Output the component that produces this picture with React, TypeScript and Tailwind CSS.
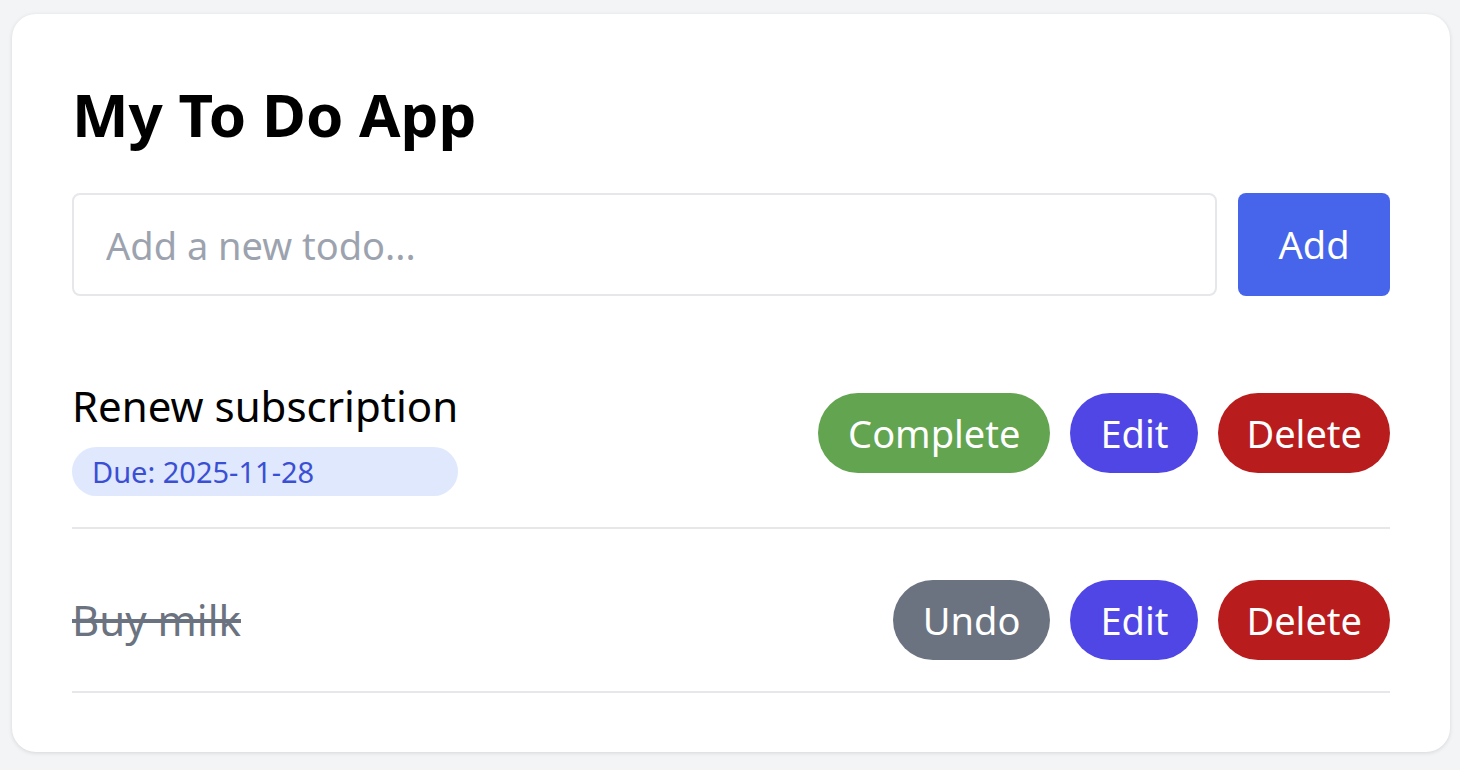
import { useState } from "react";

type Todo = { id: number; text: string; due?: string; done: boolean };

const initialTodos: Todo[] = [
  { id: 1, text: "Renew subscription", due: "2025-11-28", done: false },
  { id: 2, text: "Buy milk", done: true },
];

const App = () => {
  const [todos, setTodos] = useState<Todo[]>(initialTodos);
  const [draft, setDraft] = useState("");

  const toggle = (id: number) =>
    setTodos((list) => list.map((t) => (t.id === id ? { ...t, done: !t.done } : t)));
  const remove = (id: number) => setTodos((list) => list.filter((t) => t.id !== id));
  const add = () => {
    if (!draft.trim()) return;
    setTodos((list) => [...list, { id: Date.now(), text: draft.trim(), done: false }]);
    setDraft("");
  };

  return (
    <div
      className="min-h-screen bg-[#f3f4f6] pt-[14px] pb-[19px] pl-[12px] pr-[10px]"
      style={{ fontFamily: '"Noto Sans", "Open Sans", sans-serif' }}
    >
      <div className="bg-white rounded-[24px] shadow-[0_1px_4px_rgba(0,0,0,0.12)] px-[60px] pt-[60px] pb-[59px]">
        <h1 className="text-[60px] leading-[80px] font-bold text-black h-[80px]">My To Do App</h1>

        <div className="flex gap-[21px] mt-[39px]">
          <input
            value={draft}
            onChange={(e) => setDraft(e.target.value)}
            placeholder="Add a new todo..."
            className="flex-1 h-[103px] border-2 border-[#e5e7eb] rounded-[8px] px-[32px] text-[38px] text-black placeholder:text-[#9ca3af] outline-none"
          />
          <button
            type="button"
            onClick={add}
            className="w-[152px] h-[103px] rounded-[8px] bg-[#4665ea] text-white text-[38px]"
          >
            Add
          </button>
        </div>

        <ul className="mt-[43px] flex flex-col gap-[20px]">
          {todos.map((todo) => (
            <li
              key={todo.id}
              className="flex items-center justify-between py-[31px] border-b-2 border-[#e5e7eb]"
            >
              <div className="flex flex-col">
                <span
                  className={`text-[42px] leading-[60px] ${
                    todo.done ? "line-through text-[#6b7280]" : "pt-[6px] text-black"
                  }`}
                >
                  {todo.text}
                </span>
                {todo.due && (
                  <span className="mt-[11px] h-[49px] rounded-full bg-[#dfe8fd] px-[20px] text-[29px] leading-[49px] text-[#3b4fd4]">
                    Due: {todo.due}
                  </span>
                )}
              </div>
              <div className="flex gap-[20px]">
                <button
                  type="button"
                  onClick={() => toggle(todo.id)}
                  className={`h-[80px] rounded-full px-[30px] text-[38px] text-white ${
                    todo.done ? "bg-[#6b7280]" : "bg-[#62a44f]"
                  }`}
                >
                  {todo.done ? "Undo" : "Complete"}
                </button>
                <button
                  type="button"
                  className="h-[80px] rounded-full px-[30px] text-[38px] text-white bg-[#4f46e5]"
                >
                  Edit
                </button>
                <button
                  type="button"
                  onClick={() => remove(todo.id)}
                  className="h-[80px] rounded-full px-[28px] text-[38px] text-white bg-[#b91c1c]"
                >
                  Delete
                </button>
              </div>
            </li>
          ))}
        </ul>
      </div>
    </div>
  );
};

export default App;
